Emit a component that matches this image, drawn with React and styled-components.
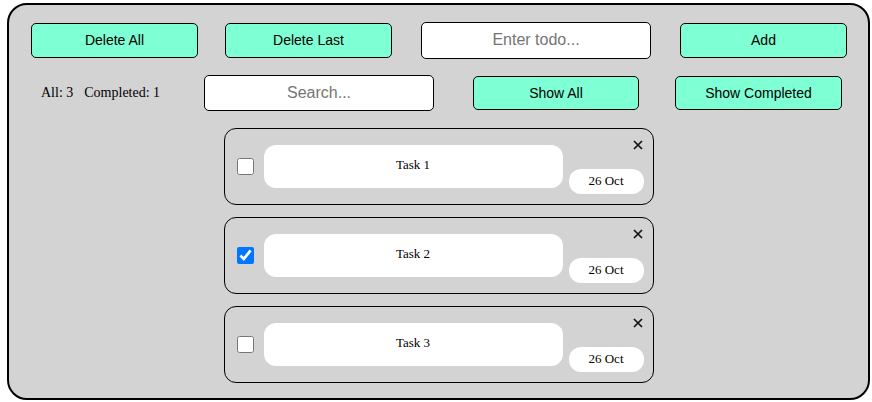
import React from "react";
import styled, { createGlobalStyle } from "styled-components";

const GlobalStyle = createGlobalStyle`
  html, body { margin: 0; padding: 0; background: #ffffff; }
  * { box-sizing: border-box; }
`;

const Board = styled.div`
  margin: 3px 0 0 7px;
  width: 863px;
  border: 2px solid #000;
  border-radius: 20px;
  background: #d3d3d3;
  padding: 17px 0 15px;
  display: flex;
  flex-direction: column;
`;

const Row = styled.div`
  display: flex;
  align-items: center;
  padding-left: ${(p) => p.$pl}px;
  margin-bottom: ${(p) => p.$mb}px;
`;

const Button = styled.button`
  flex: none;
  width: ${(p) => p.$w || 167}px;
  height: ${(p) => p.$h || 35}px;
  margin: 0 0 0 ${(p) => p.$ml || 0}px;
  padding: 0 0 1px;
  background: #7fffd4;
  border: 1px solid #000;
  border-radius: 5px;
  font-family: "Liberation Sans", Arial, sans-serif;
  font-size: 14px;
  color: #000;
  cursor: pointer;
`;

const TextInput = styled.input`
  flex: none;
  width: 230px;
  height: ${(p) => p.$h || 37}px;
  margin: 0 0 0 ${(p) => p.$ml || 0}px;
  padding: 0 8px 1px;
  background: #fff;
  border: 1px solid #000;
  border-radius: 5px;
  font-family: "Liberation Sans", Arial, sans-serif;
  font-size: 16px;
  text-align: center;
  outline: none;
  &::placeholder { color: #757575; }
`;

const Stats = styled.div`
  flex: none;
  width: 163px;
  display: flex;
  gap: 11px;
  font-family: "Liberation Serif", "Times New Roman", serif;
  font-size: 14px;
  color: #000;
`;

const List = styled.div`
  display: flex;
  flex-direction: column;
  align-items: center;
  gap: 12px;
`;

const Card = styled.div`
  width: 430px;
  height: 77px;
  border: 1px solid #000;
  border-radius: 12px;
  display: flex;
  align-items: center;
  padding: 0 9px 1px 12px;
`;

const Check = styled.input`
  flex: none;
  width: 17px;
  height: 17px;
  margin: 0 10px 0 0;
`;

const TaskText = styled.div`
  flex: none;
  width: 299px;
  height: 43px;
  padding-bottom: 2px;
  background: #fff;
  border-radius: 12px;
  display: flex;
  align-items: center;
  justify-content: center;
  font-family: "Liberation Serif", "Times New Roman", serif;
  font-size: 13px;
  color: #000;
`;

const Side = styled.div`
  flex: none;
  width: 75px;
  margin-left: 6px;
  align-self: stretch;
  display: flex;
  flex-direction: column;
  align-items: flex-end;
  justify-content: space-between;
  padding: 11px 0 9px;
`;

const Close = styled.button`
  width: 10px;
  height: 10px;
  margin-right: 1px;
  padding: 0;
  border: none;
  background: transparent;
  display: flex;
  cursor: pointer;
`;

const DatePill = styled.div`
  width: 75px;
  height: 25px;
  padding-bottom: 1px;
  background: #fff;
  border-radius: 12px;
  display: flex;
  align-items: center;
  justify-content: center;
  font-family: "Liberation Serif", "Times New Roman", serif;
  font-size: 13px;
  color: #000;
`;

const tasks = [
  { id: 1, title: "Task 1", done: false },
  { id: 2, title: "Task 2", done: true },
  { id: 3, title: "Task 3", done: false },
];

export default function App() {
  return (
    <>
      <GlobalStyle />
      <Board>
        <Row $pl={22} $mb={16}>
          <Button>Delete All</Button>
          <Button $ml={27}>Delete Last</Button>
          <TextInput $ml={29} placeholder="Enter todo..." />
          <Button $ml={29}>Add</Button>
        </Row>
        <Row $pl={32} $mb={17}>
          <Stats>
            <span>All: 3</span>
            <span>Completed: 1</span>
          </Stats>
          <TextInput $h={36} placeholder="Search..." />
          <Button $ml={39} $w={166} $h={34}>Show All</Button>
          <Button $ml={36} $h={34}>Show Completed</Button>
        </Row>
        <List>
          {tasks.map((t) => (
            <Card key={t.id}>
              <Check type="checkbox" defaultChecked={t.done} />
              <TaskText>{t.title}</TaskText>
              <Side>
                <Close aria-label="delete">
                  <svg width="10" height="10" viewBox="0 0 10 10">
                    <path d="M1 1 L9 9 M9 1 L1 9" stroke="#111" strokeWidth="1.7" />
                  </svg>
                </Close>
                <DatePill>26 Oct</DatePill>
              </Side>
            </Card>
          ))}
        </List>
      </Board>
    </>
  );
}
